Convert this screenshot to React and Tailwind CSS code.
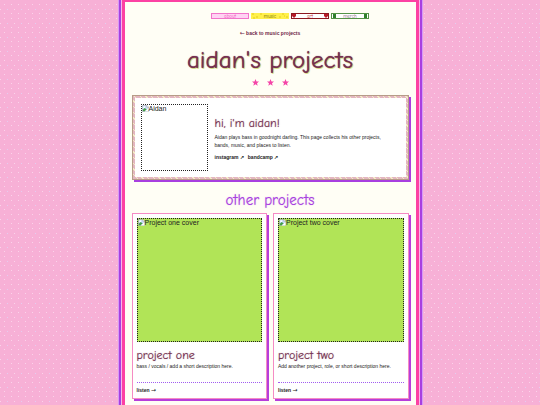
const comic = "font-['Comic_Sans_MS','Comic_Neue','Comic_Relief',cursive]";

const projects = [
  {
    title: 'project one',
    cover: 'Project one cover',
    text: 'bass / vocals / add a short description here.',
  },
  {
    title: 'project two',
    cover: 'Project two cover',
    text: 'Add another project, role, or short description here.',
  },
];

function Arrow({ children }) {
  return <span className="font-['DejaVu_Sans',sans-serif] text-[6px] font-normal">{children}</span>;
}

function BrokenImage({ label, className }) {
  return (
    <div role="img" aria-label={label} className={`flex items-start border border-dotted border-[#222] text-[7px] leading-[8px] text-[#222] ${className}`}>
      <svg viewBox="0 0 16 16" className="h-[7px] w-[7px] shrink-0" aria-hidden="true">
        <path d="M1 1h10l4 4v10H1z" fill="#c9dcf8" stroke="#8a8a8a" />
        <path d="M11 1v4h4" fill="#fff" stroke="#8a8a8a" />
        <circle cx="5" cy="5" r="2" fill="#fff" />
        <path d="M2 14V11l4-4 5 3-5 4z" fill="#43a047" />
        <path d="M6 15l9-8v8z" fill="#fff" />
      </svg>
      <span>{label}</span>
    </div>
  );
}

function NavButton({ label, className, children }) {
  return (
    <a href="#" className={`relative flex h-[6px] w-[38px] items-center justify-center text-[5px] leading-[5px] ${comic} ${className}`}>
      {children}
      <span className="relative">{label}</span>
    </a>
  );
}

function ProjectCard({ title, cover, text }) {
  return (
    <article className="border border-[#f58bc4] bg-white p-1 shadow-[2px_2px_0_#b63edb]">
      <BrokenImage label={cover} className="aspect-[125/124] w-full bg-[#b1e457]" />
      <h3 className={`mt-[6px] text-[12px] leading-[14px] text-[#75304f] [text-shadow:0_0_1px_#6f274880] ${comic}`}>{title}</h3>
      <p className="h-[20px] text-[5px] leading-[8px]">{text}</p>
      <div className="border-t border-dotted border-[#a15df0] pt-[3px] text-[5px] leading-[8px] font-bold">
        <a href="#">listen <Arrow>→</Arrow></a>
      </div>
    </article>
  );
}

export default function App() {
  return (
    <div className="relative min-h-screen overflow-hidden bg-[#f7b0d6] font-['Liberation_Sans',Arial,sans-serif] text-[#222]">
      <svg className="absolute inset-0 h-full w-full" aria-hidden="true">
        <defs>
          <pattern id="dots" width="14" height="14" patternUnits="userSpaceOnUse">
            <rect x="4" y="4" width="1" height="1" fill="#fbd3ea" />
            <rect x="11" y="4" width="1" height="1" fill="#fbd3ea" />
            <rect x="0" y="9" width="1" height="1" fill="#fbd3ea" />
            <rect x="7" y="9" width="1" height="1" fill="#e3cdf0" />
            <rect x="4" y="13" width="1" height="1" fill="#fbd3ea" />
            <rect x="11" y="13" width="1" height="1" fill="#fbd3ea" />
          </pattern>
        </defs>
        <rect width="100%" height="100%" fill="url(#dots)" />
      </svg>
      <main className="relative mx-auto min-h-screen w-[55%] max-w-[640px] border-x-[3px] border-t-2 border-[#fc41a3] bg-[#fffef5] px-[7px] pt-[11px] pb-[6px] shadow-[0_0_0_1px_#f9b4e8,0_0_0_3px_#a83fe0,0_0_0_4px_#d69af5]">
        <nav className="ml-10 flex justify-center gap-[2px]">
          <NavButton label="about" className="border border-[#f274cb] bg-[#ffd3f3] text-[#f04fb4]" />
          <NavButton label="music" className="bg-[#fff04a] text-[#6b5b00]">
            <svg className="absolute inset-0 h-full w-full" viewBox="0 0 38 6" aria-hidden="true">
              <path d="M1 1h2M5 4h2M9 1h2M28 4h2M31 1h2M35 4h2M2 5h2M33 3h1" stroke="#e3cb1d" />
            </svg>
          </NavButton>
          <NavButton label="art" className="border border-[#8d1820] bg-white text-[#c01d2a]">
            <svg className="absolute inset-0 h-full w-full" viewBox="0 0 36 4" aria-hidden="true">
              <path d="M0 0h4v2l-2 2-2-2zM32 0h4v2l-2 2-2-2z" fill="#b81c27" />
            </svg>
          </NavButton>
          <NavButton label="merch" className="border border-[#559447] bg-white text-[#7c5b77]">
            <svg className="absolute inset-0 h-full w-full" viewBox="0 0 36 4" aria-hidden="true">
              <path d="M1 0h3v4H1zM32 0h3v4h-3z" fill="#31802d" />
            </svg>
          </NavButton>
        </nav>
        <div className="mt-[10px] text-center text-[5px] leading-[8px] font-bold text-[#6f2748]">
          <a href="#"><Arrow>←</Arrow> back to music projects</a>
        </div>
        <h1 className={`mt-[7px] text-center text-[25px] leading-[32px] text-[#75304f] [text-shadow:0_0_1px_#75304f,1px_1px_0_#dcec8b] ${comic}`}>
          aidan's projects
        </h1>
        <div className="mt-[3px] flex justify-center gap-2" aria-hidden="true">
          {[0, 1, 2].map((n) => (
            <svg key={n} viewBox="0 0 14 14" className="h-[7px] w-[7px]">
              <path d="M7 0l2 5 5 .2-4 3.2 1.400 5L7 10.500l-4.400 2.900 1.400-5-4-3.200L5 5z" fill="#f445a8" />
            </svg>
          ))}
        </div>
        <section className="mt-[9px] border border-[#b79c88] bg-[repeating-linear-gradient(45deg,#e3b6c0_0px,#e3b6c0_3px,#f4ecc6_3px,#f4ecc6_4px)] p-[2px] shadow-[2px_2px_0_#a83fe0]">
          <div className="flex items-center gap-[7px] bg-white p-[6px]">
            <BrokenImage label="Aidan" className="h-[67px] w-[67px] shrink-0" />
            <div className="pr-4">
              <h2 className={`text-[12px] leading-[16px] text-[#75304f] [text-shadow:0_0_1px_#6f274880] ${comic}`}>hi, i'm aidan!</h2>
              <p className="mt-[2px] text-[5px] leading-[8px]">
                Aidan plays bass in goodnight darling. This page collects his other projects, bands, music, and places to listen.
              </p>
              <div className="mt-1 flex gap-1 text-[5px] leading-[8px] font-bold">
                <a href="#">instagram ↗</a>
                <a href="#">bandcamp ↗</a>
              </div>
            </div>
          </div>
        </section>
        <h2 className={`mt-[11px] text-center text-[15px] leading-[18px] text-[#a83fe0] [text-shadow:0_0_1px_#a83fe080] ${comic}`}>other projects</h2>
        <div className="mt-1 grid grid-cols-2 gap-[6px]">
          {projects.map((project) => (
            <ProjectCard key={project.title} {...project} />
          ))}
        </div>
      </main>
    </div>
  );
}
